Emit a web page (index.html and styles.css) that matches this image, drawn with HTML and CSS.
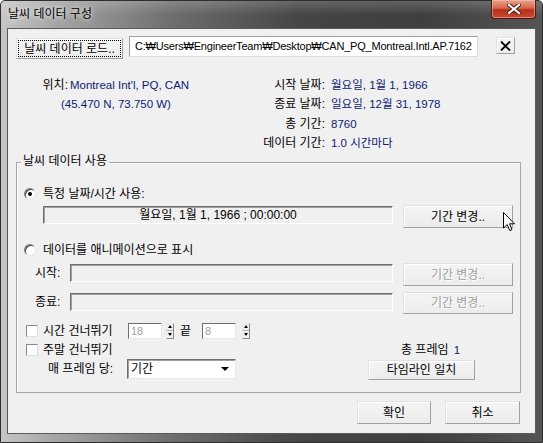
FILE: index.html
```html
<!DOCTYPE html>
<html lang="ko">
<head>
<meta charset="utf-8">
<title>날씨 데이터 구성</title>
<link rel="stylesheet" href="styles.css">
</head>
<body>
<div class="window">
  <div class="titlebar">
    <span class="title">날씨 데이터 구성</span>
    <div class="close">
      <svg width="14" height="10" viewBox="0 0 14 10"><path d="M2 1 L12 9 M12 1 L2 9" stroke="#3a1a14" stroke-width="4" stroke-linecap="square"/><path d="M2 1 L12 9 M12 1 L2 9" stroke="#fff" stroke-width="2.2" stroke-linecap="square"/></svg>
    </div>
  </div>
  <div class="client">
    <div class="row-load">
      <button class="btn load"><span class="focus">날씨 데이터 로드..</span></button>
      <div class="path">C:₩Users₩EngineerTeam₩Desktop₩CAN_PQ_Montreal.Intl.AP.7162</div>
      <button class="btn clear"><svg width="11" height="10" viewBox="0 0 11 10"><path d="M1 0.5 L10 9.5 M10 0.5 L1 9.5" stroke="#000" stroke-width="1.8"/></svg></button>
    </div>

    <div class="info">
      <div class="lab">위치:</div>
      <div class="val v1">Montreal Int'l, PQ, CAN</div>
      <div class="lab">시작 날짜:</div>
      <div class="val v2">월요일, 1월 1, 1966</div>

      <div class="val coord">(45.470 N, 73.750 W)</div>
      <div class="lab">종료 날짜:</div>
      <div class="val v2">일요일, 12월 31, 1978</div>

      <div class="empty"></div>
      <div class="lab">총 기간:</div>
      <div class="val v2">8760</div>

      <div class="empty"></div>
      <div class="lab">데이터 기간:</div>
      <div class="val v2">1.0 시간마다</div>
    </div>

    <div class="group">
      <div class="group-title">날씨 데이터 사용</div>

      <div class="row r1">
        <span class="radio on"></span>
        <span class="radio-label">특정 날짜/시간 사용:</span>
      </div>
      <div class="row r2">
        <div class="field date">월요일, 1월 1, 1966 ; 00:00:00</div>
        <button class="btn change">기간 변경..</button>
      </div>
      <div class="row r3">
        <span class="radio"></span>
        <span class="radio-label">데이터를 애니메이션으로 표시</span>
      </div>
      <div class="row r4">
        <span class="field-label">시작:</span>
        <div class="field range"></div>
        <button class="btn change disabled">기간 변경..</button>
      </div>
      <div class="row r5">
        <span class="field-label">종료:</span>
        <div class="field range"></div>
        <button class="btn change disabled">기간 변경..</button>
      </div>
      <div class="row r6">
        <span class="check"></span>
        <span class="check-label">시간 건너뛰기</span>
        <div class="spin">18</div>
        <div class="spin-arrows a1"><span class="up"></span><span class="down"></span></div>
        <span class="end-label">끝</span>
        <div class="spin">8</div>
        <div class="spin-arrows a2"><span class="up"></span><span class="down"></span></div>
      </div>
      <div class="row r7">
        <span class="check"></span>
        <span class="check-label wide">주말 건너뛰기</span>
        <span class="total">총 프레임 <span class="num">1</span></span>
      </div>
      <div class="row r8">
        <span class="per-label">매 프레임 당:</span>
        <div class="combo"><span>기간</span><span class="caret"></span></div>
        <button class="btn match">타임라인 일치</button>
      </div>
    </div>

    <div class="actions">
      <button class="btn ok">확인</button>
      <button class="btn cancel">취소</button>
    </div>
  </div>
  <svg class="cursor" width="13" height="20" viewBox="0 0 13 20"><path d="M0.5 0.5 L0.5 16 L4.2 12.6 L6.8 18.6 L9 17.6 L6.5 11.8 L11.5 11.8 Z" fill="#fff" stroke="#000" stroke-width="1" stroke-linejoin="miter"/></svg>
</div>
</body>
</html>
```
FILE: styles.css
```css
* { box-sizing: border-box; }
html, body { margin: 0; padding: 0; }
body {
  width: 543px;
  height: 443px;
  overflow: hidden;
  font-family: "Liberation Sans", "Noto Sans CJK KR", sans-serif;
  font-size: 12px;
  color: #000;
}
.window {
  position: relative;
  width: 543px;
  height: 443px;
  background:
    linear-gradient(180deg, rgba(255,255,255,0.18) 0, rgba(255,255,255,0) 14px),
    linear-gradient(90deg, #c6c6c6 0, #a8a8a8 50px, #6e6e6e 170px, #454545 300px, #3f3f3f 420px, #555 543px);
  border: 1px solid #2e2e2e;
  border-radius: 5px 5px 0 0;
}
.titlebar {
  height: 27px;
  display: flex;
  align-items: flex-start;
  justify-content: space-between;
}
.title {
  margin: 6px 0 0 7px;
  line-height: 14px;
  font-size: 12px;
  color: #000;
  text-shadow: 0 0 4px rgba(255,255,255,0.9), 0 0 8px rgba(255,255,255,0.6);
}
.close {
  width: 45px;
  height: 19px;
  margin-right: 6px;
  margin-top: -1px;
  border: 1px solid #4a1a12;
  border-top: none;
  border-radius: 0 0 4px 4px;
  background: linear-gradient(180deg, #e8a48e 0, #d6644a 45%, #b8301a 55%, #c84a30 100%);
  box-shadow: inset 0 0 0 1px rgba(255,200,180,0.5);
  display: flex;
  align-items: center;
  justify-content: center;
}
.client {
  margin: 0 6px;
  height: 406px;
  background: #f0f0f0;
  border: 1px solid #5a5a5a;
}

/* buttons */
.btn {
  font: inherit;
  color: #000;
  padding: 0;
  margin: 0;
  background: linear-gradient(180deg, #f4f4f4, #ececec);
  border: 1px solid;
  border-color: #e2e2e2 #a0a0a0 #a0a0a0 #e2e2e2;
  box-shadow: inset 1px 1px 0 #fff;
  display: flex;
  align-items: center;
  justify-content: center;
  line-height: 14px;
}
.btn.disabled { color: #a0a0a0; text-shadow: 1px 1px 0 #fff; }

.row-load {
  display: flex;
  align-items: flex-start;
  padding-top: 7px;
  height: 28px;
}
.load {
  margin: 2px 0 0 8px;
  width: 107px;
  height: 21px;
  padding: 1px;
}
.load .focus {
  display: flex;
  align-items: center;
  justify-content: center;
  width: 100%;
  height: 100%;
  border: 1px dotted #000;
}
.path {
  margin-left: 6px;
  width: 349px;
  height: 21px;
  background: #fff;
  border: 1px solid;
  border-color: #a0a0a0 #dcdcdc #dcdcdc #a0a0a0;
  padding-left: 5px;
  line-height: 19px;
  font-size: 11px;
  letter-spacing: -0.2px;
  white-space: nowrap;
  overflow: hidden;
}
.clear {
  margin: 1px 0 0 18px;
  width: 19px;
  height: 17px;
}

/* info */
.info {
  margin-top: 18px;
  display: grid;
  grid-template-columns: 60px 180px 77px 1fr;
  grid-auto-rows: 19.5px;
  align-items: center;
  line-height: 14px;
}
.lab { text-align: right; white-space: nowrap; }
.val { white-space: nowrap; color: #0c1c70; }
.v1 { padding-left: 2px; font-size: 11.5px; }
.v2 { padding-left: 6px; font-size: 11.5px; }
.coord { grid-column: 1 / 3; padding-left: 53px; font-size: 11.5px; }
.empty { grid-column: 1 / 3; }

/* group */
.group {
  margin: 9px 0 0 8px;
  width: 505px;
  height: 231px;
  border: 1px solid #a6a6a6;
  box-shadow: inset 1px 1px 0 #fff;
}
.group-title {
  width: max-content;
  margin: -9px 0 0 4px;
  padding: 0 2px;
  height: 14px;
  line-height: 14px;
  background: #f0f0f0;
}
.row {
  display: flex;
  align-items: center;
  line-height: 14px;
}
.r1 { margin-top: 18px; height: 16px; }
.r2 { margin-top: 3px; height: 23px; align-items: flex-start; }
.r3 { margin-top: 14px; height: 16px; }
.r4 { margin-top: 5px; height: 23px; align-items: flex-start; }
.r5 { margin-top: 6px; height: 22px; align-items: flex-start; }
.r6 { margin-top: 8px; height: 17px; }
.r7 { margin-top: 3px; height: 16px; }
.r8 { margin-top: 1px; height: 21px; align-items: flex-start; }

.radio {
  margin-left: 7px;
  width: 12px;
  height: 12px;
  border-radius: 50%;
  border: 1px solid;
  border-color: #808080 #e8e8e8 #e8e8e8 #808080;
  background: #fff;
  box-shadow: inset 1px 1px 0 #404040;
  display: flex;
  align-items: center;
  justify-content: center;
}
.radio.on::after {
  content: "";
  width: 4px;
  height: 4px;
  border-radius: 50%;
  background: #000;
}
.radio-label { margin-left: 7px; white-space: nowrap; }

.field {
  margin-top: 1px;
  height: 18px;
  background: #f0f0f0;
  border: 1px solid;
  border-color: #6e6e6e #fff #fff #6e6e6e;
  box-shadow: inset 1px 1px 0 #a0a0a0;
}
.date {
  margin-left: 26px;
  width: 350px;
  text-align: center;
  line-height: 16px;
  white-space: nowrap;
}
.change {
  margin-left: 10px;
  width: 110px;
  height: 23px;
}
.r5 .change { height: 22px; }
.field-label {
  margin-left: 18px;
  width: 35px;
  line-height: 18px;
  margin-top: 1px;
  white-space: nowrap;
}
.range { width: 323px; }

.check {
  margin-left: 9px;
  width: 12px;
  height: 12px;
  background: #fff;
  border: 1px solid;
  border-color: #8a8a8a #e0e0e0 #e0e0e0 #8a8a8a;
}
.check-label {
  margin-left: 5px;
  width: 85px;
  white-space: nowrap;
}
.check-label.wide { width: 358px; }
.spin {
  width: 34px;
  height: 16px;
  background: #fff;
  border: 1px solid;
  border-color: #6e6e6e #e8e8e8 #e8e8e8 #6e6e6e;
  color: #a0a0a0;
  font-size: 11px;
  line-height: 14px;
  padding-left: 2px;
}
.spin-arrows {
  width: 8px;
  height: 16px;
  display: flex;
  flex-direction: column;
  border: 1px solid;
  border-color: #e8e8e8 #8a8a8a #8a8a8a #e8e8e8;
  background: #f0f0f0;
}
.a1 { margin-left: 4px; }
.a2 { margin-left: 6px; }
.spin-arrows span {
  flex: 1;
  display: flex;
  align-items: center;
  justify-content: center;
}
.spin-arrows .up { border-bottom: 1px solid #b0b0b0; }
.spin-arrows .up::after {
  content: "";
  border-left: 2.5px solid transparent;
  border-right: 2.5px solid transparent;
  border-bottom: 3px solid #000;
}
.spin-arrows .down::after {
  content: "";
  border-left: 2.5px solid transparent;
  border-right: 2.5px solid transparent;
  border-top: 3px solid #000;
}
.end-label {
  margin-left: 6px;
  width: 22px;
  white-space: nowrap;
}
.total { white-space: nowrap; }
.total .num { color: #0c1c70; font-size: 11.5px; margin-left: 2px; }

.per-label {
  margin-left: 31px;
  width: 79px;
  line-height: 20px;
  white-space: nowrap;
}
.combo {
  width: 109px;
  height: 20px;
  background: #fff;
  border: 1px solid;
  border-color: #6e6e6e #e8e8e8 #e8e8e8 #6e6e6e;
  box-shadow: inset 1px 1px 0 #a0a0a0;
  display: flex;
  align-items: center;
  justify-content: space-between;
  padding: 0 3px 0 3px;
  line-height: 16px;
}
.caret {
  width: 0;
  height: 0;
  margin-right: 3px;
  border-left: 4px solid transparent;
  border-right: 4px solid transparent;
  border-top: 4px solid #000;
}
.match {
  margin: 1px 0 0 132px;
  width: 107px;
  height: 20px;
}

.actions {
  margin-top: 8px;
  display: flex;
  justify-content: flex-end;
  gap: 14px;
  padding-right: 15px;
}
.ok { width: 74px; height: 23px; }
.cancel { width: 75px; height: 23px; }

.cursor {
  position: absolute;
  left: 502px;
  top: 211px;
}
```
